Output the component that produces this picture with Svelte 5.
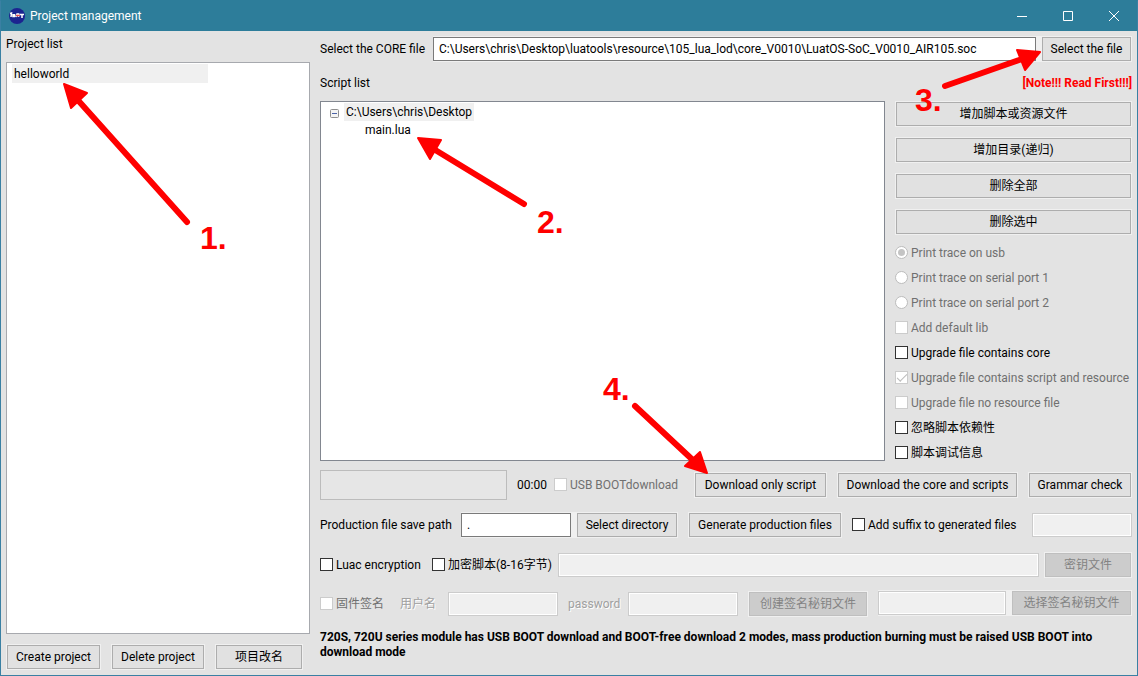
<script lang="ts">
  const scriptActions = ['增加脚本或资源文件', '增加目录(递归)', '删除全部', '删除选中'];
  const traceOptions = ['Print trace on usb', 'Print trace on serial port 1', 'Print trace on serial port 2'];
  const buildOptions = [
    { label: 'Add default lib', checked: false, disabled: true },
    { label: 'Upgrade file contains core', checked: false, disabled: false },
    { label: 'Upgrade file contains script and resource', checked: true, disabled: true },
    { label: 'Upgrade file no resource file', checked: false, disabled: true },
    { label: '忽略脚本依赖性', checked: false, disabled: false },
    { label: '脚本调试信息', checked: false, disabled: false },
  ];
  const steps = [
    { text: '1.', x: 200, y: 249, line: 'M187 222L76 98', head: '64,84 87,93 71,108' },
    { text: '2.', x: 537, y: 233, line: 'M524 204L432 148', head: '418,138 441,140 430,159' },
    { text: '3.', x: 915, y: 111, line: 'M945 86L1022 59', head: '1040,52 1017,50 1025,70' },
    { text: '4.', x: 603, y: 400, line: 'M635 406L696 463', head: '707,473 700,452 685,466' },
  ];
  let corePath = 'C:\\Users\\chris\\Desktop\\luatools\\resource\\105_lua_lod\\core_V0010\\LuatOS-SoC_V0010_AIR105.soc';
  let savePath = '.';
  let trace = traceOptions[0];
  let expanded = true;
</script>

<div class="window">
  <header class="titlebar">
    <svg class="logo" width="16" height="16" viewBox="0 0 16 16">
      <circle cx="8" cy="8" r="8" fill="#1c2490" />
      <path d="M1 5.500L2.500 5L2 9M4 6v2.500h1.500V6M7 9l1-3h1.500v3" fill="none" stroke="#fff" stroke-width="1.500" />
      <path d="M7 7.500h4" stroke="#e2504e" stroke-width="1.500" />
      <path d="M10.500 6.500H15M13 6.500V10" fill="none" stroke="#fff" stroke-width="1.500" />
    </svg>
    <h1>Project management</h1>
    <div class="controls">
      <button aria-label="Minimize">
        <svg width="12" height="12" viewBox="0 0 12 12"><path d="M1 6.500h10" /></svg>
      </button>
      <button aria-label="Maximize">
        <svg width="12" height="12" viewBox="0 0 12 12"><path d="M1.500 1.500h9v9h-9z" /></svg>
      </button>
      <button aria-label="Close">
        <svg width="12" height="12" viewBox="0 0 12 12"><path d="M1 1l10 10M11 1L1 11" /></svg>
      </button>
    </div>
  </header>

  <div class="content">
    <aside>
      <h2>Project list</h2>
      <ul class="projects">
        <li>helloworld</li>
      </ul>
      <div class="projectActions">
        <button class="btn">Create project</button>
        <button class="btn">Delete project</button>
        <button class="btn">项目改名</button>
      </div>
    </aside>

    <main>
      <div class="row core">
        <label for="core">Select the CORE file</label>
        <div class="picker">
          <input id="core" class="field" type="text" bind:value={corePath} />
          <button class="btn">Select the file</button>
        </div>
      </div>

      <div class="listHeader">
        <h2>Script list</h2>
        <strong class="note">[Note!!! Read First!!!]</strong>
      </div>

      <div class="scripts">
        <div class="tree">
          <div class="node">
            <button class="toggle" aria-label="Toggle folder" on:click={() => (expanded = !expanded)}>
              <svg width="9" height="9" viewBox="0 0 9 9">
                <rect x="0.500" y="0.500" width="8" height="8" rx="1" fill="#f4f4f4" stroke="#8f8f8f" />
                <path d="M2 4.500h5" stroke="#4b63a7" />
                {#if !expanded}<path d="M4.500 2v5" stroke="#4b63a7" />{/if}
              </svg>
            </button>
            <span class="folder">C:\Users\chris\Desktop</span>
          </div>
          {#if expanded}
            <div class="leaf">main.lua</div>
          {/if}
        </div>

        <div class="side">
          {#each scriptActions as action}
            <button class="btn">{action}</button>
          {/each}
          <div class="options">
            {#each traceOptions as option}
              <label class="check disabled">
                <input type="radio" name="trace" value={option} bind:group={trace} disabled />
                {option}
              </label>
            {/each}
            {#each buildOptions as option}
              <label class="check" class:disabled={option.disabled}>
                <input type="checkbox" bind:checked={option.checked} disabled={option.disabled} />
                {option.label}
              </label>
            {/each}
          </div>
        </div>
      </div>

      <div class="row download">
        <div class="progress" role="progressbar" aria-label="Download" aria-valuenow="0"></div>
        <span>00:00</span>
        <label class="check disabled"><input type="checkbox" disabled />USB BOOTdownload</label>
        <button class="btn">Download only script</button>
        <button class="btn">Download the core and scripts</button>
        <button class="btn">Grammar check</button>
      </div>

      <div class="row production">
        <label for="save">Production file save path</label>
        <div class="picker">
          <input id="save" class="field" type="text" bind:value={savePath} />
          <button class="btn">Select directory</button>
        </div>
        <button class="btn">Generate production files</button>
        <label class="check"><input type="checkbox" />Add suffix to generated files</label>
        <input class="field" type="text" aria-label="Suffix" disabled />
      </div>

      <div class="row encryption">
        <label class="check"><input type="checkbox" />Luac encryption</label>
        <label class="check"><input type="checkbox" />加密脚本(8-16字节)</label>
        <input class="field" type="text" aria-label="加密脚本" disabled />
        <button class="btn" disabled>密钥文件</button>
      </div>

      <div class="row signature">
        <label class="check disabled"><input type="checkbox" disabled />固件签名</label>
        <label class="etched" for="user">用户名</label>
        <input id="user" class="field" type="text" disabled />
        <label class="etched" for="password">password</label>
        <input id="password" class="field" type="password" disabled />
        <button class="btn" disabled>创建签名秘钥文件</button>
        <div class="picker raised">
          <input class="field" type="text" aria-label="签名秘钥文件" disabled />
          <button class="btn" disabled>选择签名秘钥文件</button>
        </div>
      </div>

      <p class="hint">
        720S, 720U series module has USB BOOT download and BOOT-free download 2 modes, mass production burning must be raised USB BOOT into download mode
      </p>
    </main>
  </div>

  <svg class="steps">
    {#each steps as step}
      <path d={step.line} />
      <polygon points={step.head} />
      <text x={step.x} y={step.y}>{step.text}</text>
    {/each}
  </svg>
</div>

<style>
  :global(body) {
    margin: 0;
  }
  .window {
    position: relative;
    display: flex;
    flex-direction: column;
    min-height: 100vh;
    box-sizing: border-box;
    border: 1px solid #3a80a3;
    border-top-color: #2d7d9a;
    background: #e3e3e3;
    color: #000;
    font: 12px/16px Roboto, 'Noto Sans CJK SC', sans-serif;
    white-space: nowrap;
  }
  h1,
  h2 {
    margin: 0;
    font-size: 12px;
    font-weight: 400;
  }
  .titlebar {
    display: flex;
    align-items: center;
    height: 30px;
    padding-left: 8px;
    gap: 5px;
    background: #2d7d9a;
    color: #fff;
  }
  .controls {
    display: flex;
    margin-left: auto;
  }
  .controls button {
    display: grid;
    place-items: center;
    width: 46px;
    height: 30px;
    padding: 0;
    border: none;
    background: none;
  }
  .controls path {
    fill: none;
    stroke: #fff;
  }
  .content {
    display: grid;
    grid-template-columns: 304px minmax(0, 1fr);
    gap: 10px;
    flex: 1;
    padding: 5px;
  }
  aside,
  main {
    display: flex;
    flex-direction: column;
  }
  main {
    padding-bottom: 10px;
  }
  .projects {
    flex: 1;
    margin: 10px 0;
    padding: 1px 5px;
    border: 1px solid #a7a9ae;
    background: #fff;
    list-style: none;
  }
  .projects li {
    width: 192px;
    padding: 2px 2px 1px;
    background: #f0f0f0;
  }
  .projectActions {
    display: grid;
    grid-template-columns: 95px 94px 88px;
    gap: 10px;
  }
  .btn {
    height: 26px;
    padding: 0;
    border: 1px solid #f0f0f0;
    outline: 1px solid #adadad;
    outline-offset: -2px;
    background: #e1e1e1;
    color: inherit;
    font: inherit;
  }
  .btn:disabled {
    outline-color: #bfbfbf;
    background: #ccc;
    color: #838383;
  }
  .field {
    width: 100%;
    min-width: 0;
    height: 24px;
    box-sizing: border-box;
    padding: 0 5px;
    border: 1px solid #7a7a7a;
    background: #fff;
    font: inherit;
  }
  .field:disabled {
    border-color: #ccc;
    background: #f0f0f0;
    box-shadow: inset 0 0 0 1px #fff;
  }
  .row {
    display: grid;
    align-items: center;
  }
  .picker {
    display: grid;
    align-items: center;
    gap: 5px;
    background: #f0f0f0;
  }
  .core {
    grid-template-columns: 113px 1fr;
  }
  .core .picker {
    grid-template-columns: 1fr 91px;
  }
  .listHeader {
    display: flex;
    align-items: center;
    justify-content: space-between;
    height: 36px;
    padding-top: 3px;
  }
  .scripts {
    display: grid;
    grid-template-columns: minmax(0, 1fr) 237px;
    gap: 10px;
    flex: 1;
  }
  .note {
    color: #f00;
  }
  .tree {
    padding: 1px 9px;
    border: 1px solid #828790;
    background: #fff;
  }
  .node {
    display: flex;
    align-items: center;
    gap: 5px;
  }
  .toggle {
    display: flex;
    padding: 2px 0 0;
    border: none;
    background: none;
  }
  .folder {
    padding: 1px 2px;
    background: #f0f0f0;
  }
  .leaf {
    padding: 1px 0 0 35px;
  }
  .side {
    display: flex;
    flex-direction: column;
    gap: 10px;
  }
  .options {
    display: flex;
    flex-direction: column;
    gap: 9px;
    height: 214px;
  }
  .check {
    display: flex;
    align-items: center;
    gap: 3px;
  }
  .check.disabled {
    color: #707070;
  }
  .check input {
    display: grid;
    place-content: center;
    flex: none;
    width: 13px;
    height: 13px;
    margin: 0 0 1px;
    appearance: none;
    border: 1px solid #333;
    background: #fff;
  }
  .check input:disabled {
    border-color: #ccc;
  }
  .check input[type='radio'] {
    border-radius: 50%;
    border-color: #bcbcbc;
  }
  .check input[type='radio']:checked::before {
    content: '';
    width: 7px;
    height: 7px;
    border-radius: 50%;
    background: #c4c4c4;
  }
  .check input[type='checkbox']:checked::before {
    content: '';
    width: 10px;
    height: 5px;
    margin-bottom: 3px;
    box-sizing: border-box;
    border: solid #bcbcbc;
    border-width: 0 0 1px 1px;
    rotate: -45deg;
  }
  .download {
    grid-template-columns: minmax(0, 1fr) 27px 130px 133px 181px 104px;
    gap: 10px;
    margin-top: 9px;
  }
  .progress {
    height: 28px;
    border: 1px solid #bcbcbc;
    background: #e6e6e6;
  }
  .production {
    grid-template-columns: 131px 217px 154px 170px minmax(0, 1fr);
    column-gap: 10px;
    margin-top: 12px;
  }
  .production .picker {
    grid-template-columns: 110px 1fr;
  }
  .encryption {
    grid-template-columns: 112px 126px minmax(0, 1fr) 88px;
    margin-top: 14px;
  }
  .encryption .field {
    width: auto;
    margin-right: 5px;
  }
  .signature {
    grid-template-columns: 70px 38px 110px 50px 110px 120px minmax(0, 1fr);
    gap: 10px;
    margin-top: 12px;
    height: 28px;
  }
  .signature .picker {
    grid-template-columns: minmax(0, 1fr) 121px;
    align-self: start;
  }
  .etched {
    color: #a0a0a0;
    text-shadow: 1px 1px #fff;
  }
  .hint {
    margin: 12px 0 0;
    font-weight: bold;
    line-height: 15px;
    white-space: normal;
  }
  .steps {
    position: absolute;
    top: -1px;
    left: -1px;
    width: 100%;
    height: 100%;
    overflow: visible;
    pointer-events: none;
    fill: #f00;
    stroke-linejoin: round;
    stroke-linecap: round;
  }
  .steps path {
    stroke: #f00;
    stroke-width: 6;
  }
  .steps polygon {
    stroke: #f00;
    stroke-width: 2;
  }
  .steps text {
    font: bold 32px 'Liberation Sans', sans-serif;
  }
</style>
